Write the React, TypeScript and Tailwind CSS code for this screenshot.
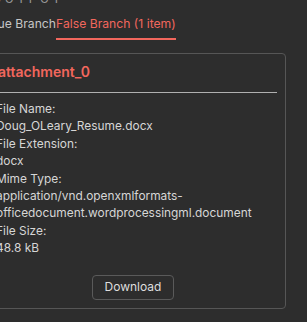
export default function App() {
  const fields = [
    { label: "File Name:", value: "Doug_OLeary_Resume.docx" },
    { label: "File Extension:", value: "docx" },
    {
      label: "Mime Type:",
      value: "application/vnd.openxmlformats-officedocument.wordprocessingml.document",
    },
    { label: "File Size:", value: "48.8 kB" },
  ]

  return (
    <div
      className="h-[322px] w-[307px] overflow-hidden bg-[#2d2d2d]"
      style={{ fontFamily: "Inter, 'Noto Sans', sans-serif" }}
    >
      <div className="-mt-[9px] ml-[-8px] text-[12px] leading-[16px] tracking-[0.3em] text-[#9a9a9a]">
        OUTPUT
      </div>

      <div className="flex items-end pt-[7px] text-[12.2px] leading-[20px]">
        <div className="flex w-[56px] justify-end">
          <span className="whitespace-nowrap pb-[6px] text-[#c6c6c6]">
            True Branch
          </span>
        </div>
        <span className="whitespace-nowrap border-b-2 border-[#f2675d] pb-[4px] text-[#f2675d]">
          False Branch (1 item)
        </span>
      </div>

      <div className="ml-[-20px] mt-[13px] w-[306px] rounded-[4px] border border-[#565656] p-2">
        <h3 className="pl-[9px] text-[14px] font-semibold leading-[20px] text-[#f2675d]">
          attachment_0
        </h3>
        <div className="mt-[10px] h-px bg-[#b0b0b0]" />
        <div className="mt-[7px] pl-[7px] text-[11.9px] leading-[17.4px] text-[#d6d6d6]">
          {fields.map((f) => (
            <div key={f.label}>
              <div>{f.label}</div>
              <div className="break-words">{f.value}</div>
            </div>
          ))}
        </div>
        <div className="mt-[18px] flex justify-center">
          <button className="h-[25px] rounded-[4px] border border-[#5a5a5a] px-3 text-[12px] text-[#dedede]">
            Download
          </button>
        </div>
      </div>
    </div>
  )
}
